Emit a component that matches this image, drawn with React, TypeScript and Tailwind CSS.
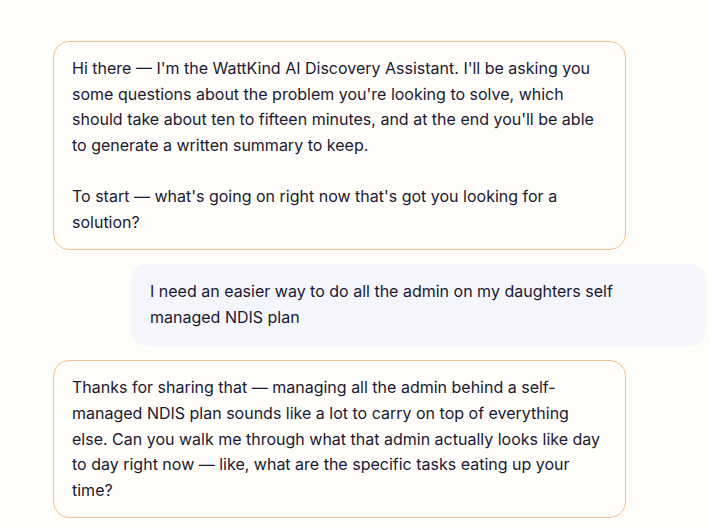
const messages = [
  {
    role: 'assistant',
    text: "Hi there — I'm the WattKind AI Discovery Assistant. I'll be asking you some questions about the problem you're looking to solve, which should take about ten to fifteen minutes, and at the end you'll be able to generate a written summary to keep.\n\nTo start — what's going on right now that's got you looking for a solution?",
  },
  {
    role: 'user',
    text: 'I need an easier way to do all the admin on my daughters self managed NDIS plan',
  },
  {
    role: 'assistant',
    text: 'Thanks for sharing that — managing all the admin behind a self-managed NDIS plan sounds like a lot to carry on top of everything else. Can you walk me through what that admin actually looks like day to day right now — like, what are the specific tasks eating up your time?',
  },
];

export default function App() {
  return (
    <div
      className="min-h-screen w-full bg-[#fffdf9] text-[#1a1832] overflow-hidden"
      style={{ fontFamily: 'Inter, "Noto Sans", sans-serif' }}
    >
      <div className="flex flex-col gap-[14px] pt-[41px] pl-[53px] pr-[3px]">
        {messages.map((m, i) =>
          m.role === 'assistant' ? (
            <div key={i} className="flex justify-start">
              <div className="w-[573px] rounded-2xl border border-[#f0c294] bg-[#fffdf9] px-[18px] py-[14px] text-[16px] leading-[25.6px] whitespace-pre-wrap">
                {m.text}
              </div>
            </div>
          ) : (
            <div key={i} className="flex justify-end">
              <div className="w-[575px] rounded-2xl bg-[#f4f6fb] px-[19px] pt-[15px] pb-[16px] text-[16px] leading-[25.6px]">
                {m.text}
              </div>
            </div>
          )
        )}
      </div>
    </div>
  );
}
